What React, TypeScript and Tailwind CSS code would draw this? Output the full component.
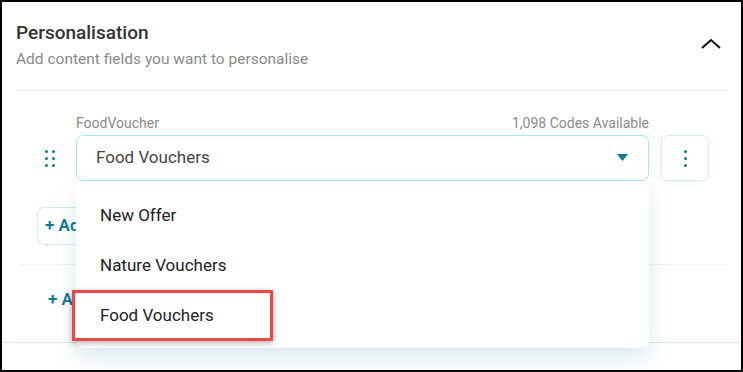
const DragHandle = () => (
  <div className="grid grid-cols-2 gap-x-[4px] gap-y-[4px] w-[10px]">
    {[0, 1, 2, 3, 4, 5].map((i) => (
      <span key={i} className="w-[3px] h-[3px] rounded-full bg-[#0b7a93]" />
    ))}
  </div>
);

const App = () => {
  return (
    <div
      className="relative w-[743px] h-[372px] bg-white border-2 border-black overflow-hidden text-[#333]"
      style={{ fontFamily: "Roboto, 'Liberation Sans', sans-serif" }}
    >
      {/* Header */}
      <div className="flex items-start justify-between pl-[14px] pr-[14px] pt-[18px]">
        <div>
          <h2 className="text-[19px] leading-[26px] font-medium text-[#333]">Personalisation</h2>
          <p className="mt-[3px] text-[15.5px] leading-[20px] text-[#8a8a8a]">
            Add content fields you want to personalise
          </p>
        </div>
        <svg width="22" height="14" viewBox="0 0 22 14" className="mt-[17px] mr-[5px]">
          <path d="M2 11 L11 3 L20 11" fill="none" stroke="#111" strokeWidth="2" />
        </svg>
      </div>
      <div className="mx-[14px] mt-[21px] h-px bg-[#eeeeee]" />

      {/* Field row */}
      <div className="pl-[43px] pt-[24px]">
        <div className="ml-[31px] flex justify-between text-[14px] leading-[16px] text-[#8a8a8a] w-[573px]">
          <span>FoodVoucher</span>
          <span>1,098 Codes Available</span>
        </div>
        <div className="flex items-center mt-[4px]">
          <div className="w-[31px]">
            <DragHandle />
          </div>
          <div className="relative w-[573px] h-[46px] border border-[#a9e5f6] rounded-[7px] flex items-center justify-between pl-[19px] pr-[20px]">
            <span className="text-[17px] text-[#444]">Food Vouchers</span>
            <svg width="11" height="8" viewBox="0 0 11 8">
              <path d="M0 0 H11 L5.5 7 Z" fill="#0b7a93" />
            </svg>

            {/* Dropdown */}
            <div className="absolute left-[-1px] top-[46px] w-[573px] bg-white rounded-b-[8px] shadow-[0_10px_22px_rgba(40,120,140,0.16)] pt-[9px] pb-[7px] z-10">
              {["New Offer", "Nature Vouchers", "Food Vouchers"].map((o) => (
                <div key={o} className="h-[50px] flex items-center pl-[24px] text-[17px] text-[#222]">
                  {o}
                </div>
              ))}
              <div className="absolute left-[-4px] top-[108px] w-[201px] h-[51px] border-[3px] border-[#ef4646] shadow-[0_2px_6px_rgba(0,0,0,0.3)]" />
            </div>
          </div>
          <button className="ml-[12px] w-[48px] h-[46px] rounded-[7px] border border-[#d4eef4] shadow-[0_2px_4px_rgba(40,120,140,0.08)] flex flex-col items-center justify-center gap-[4px]">
            <span className="w-[3px] h-[3px] rounded-full bg-[#0b7a93]" />
            <span className="w-[3px] h-[3px] rounded-full bg-[#0b7a93]" />
            <span className="w-[3px] h-[3px] rounded-full bg-[#0b7a93]" />
          </button>
        </div>
        <div className="-ml-[8px] mt-[26px]">
          <button className="w-[46px] h-[38px] pl-[7px] rounded-[7px] border border-[#d4eaef] text-[17px] font-semibold text-[#0b7a93] text-left overflow-hidden whitespace-nowrap">
            + Ad
          </button>
        </div>
      </div>
      <div className="ml-[18px] mr-[14px] mt-[19px] h-px bg-[#eef2f3]" />
      <div className="pl-[46px] pt-[23px] h-[77px]">
        <span className="text-[17px] leading-[20px] font-semibold text-[#0b7a93]">+ A</span>
      </div>
      <div className="h-px bg-[#d9ecf0]" />
    </div>
  );
};

export default App;
